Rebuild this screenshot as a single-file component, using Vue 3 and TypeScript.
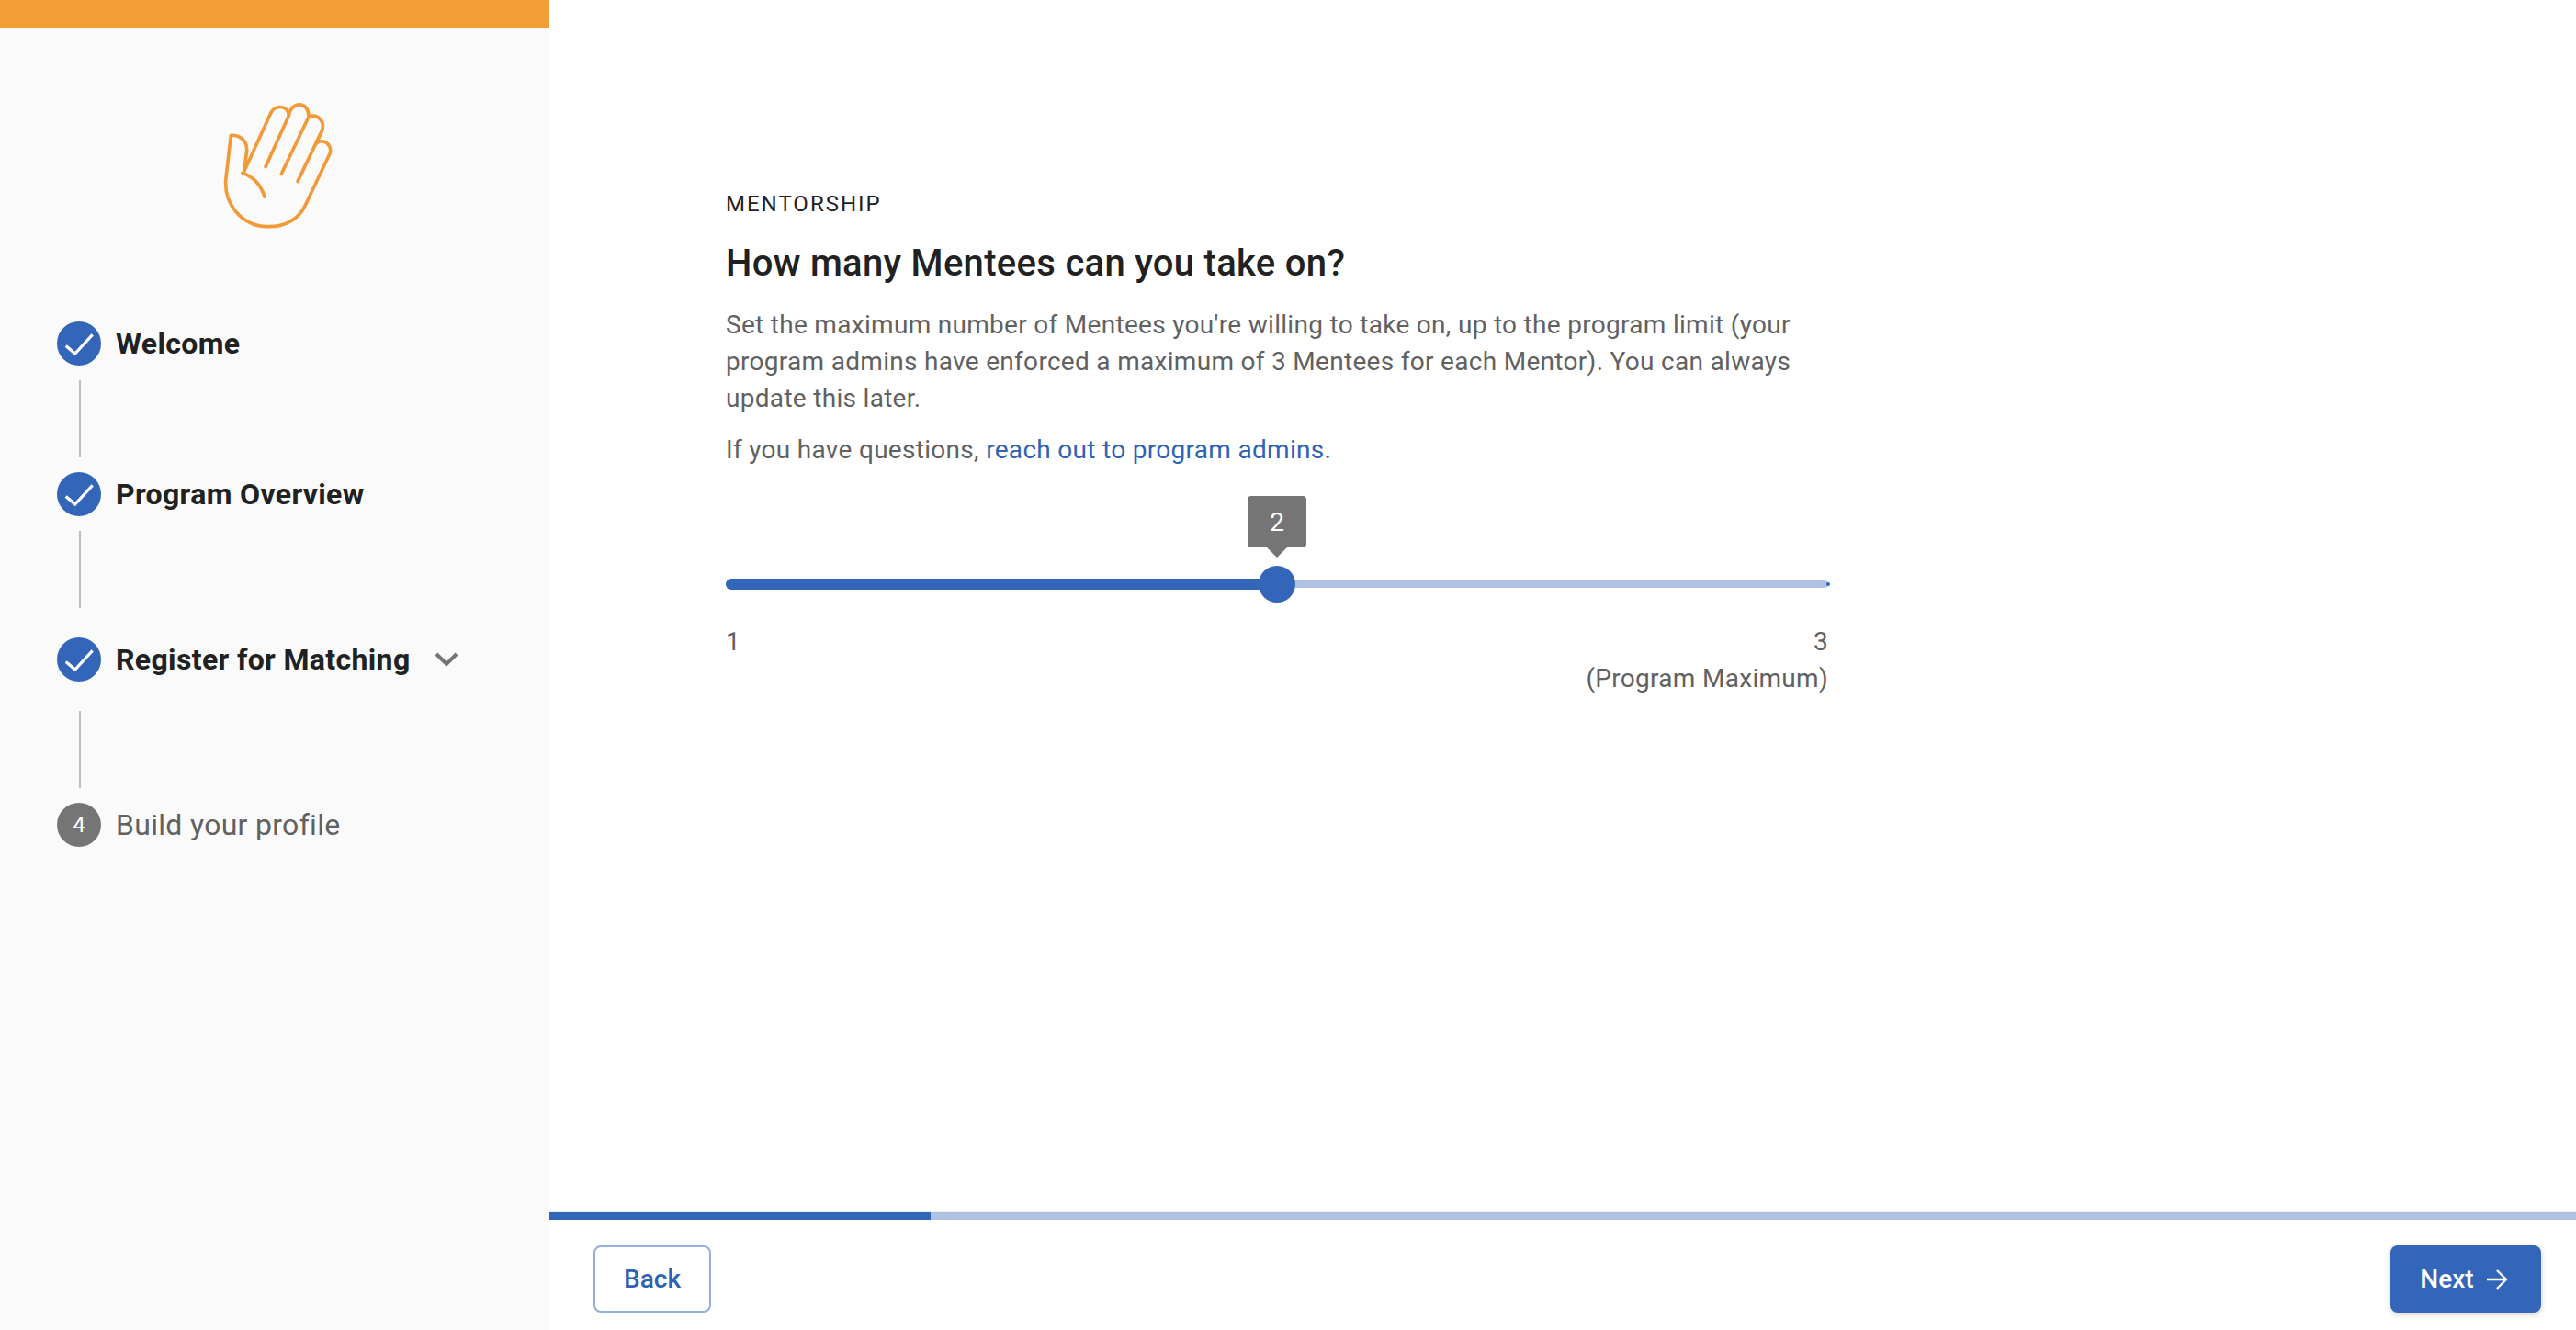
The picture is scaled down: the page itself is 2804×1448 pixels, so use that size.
<script setup lang="ts">
interface Step { label: string; done: boolean; num: number; chevron?: boolean; gap?: 'before' | 'after' }
const steps: Step[] = [
  { label: 'Welcome', done: true, num: 1 },
  { label: 'Program Overview', done: true, num: 2, gap: 'after' },
  { label: 'Register for Matching', done: true, num: 3, chevron: true, gap: 'before' },
  { label: 'Build your profile', done: false, num: 4 },
]
</script>

<template>
  <div class="page">
    <aside class="sidebar">
      <div class="accent"></div>
      <div class="logo">
        <svg width="180" height="180" viewBox="0 0 540 540" fill="none" stroke="#f29a38" stroke-width="11" stroke-linecap="round" stroke-linejoin="round">
          <path d="M127 172 C158 170 180 190 179 222 L170 290 L256 102 C268 72 312 70 316 108 C322 60 382 58 381 112 C410 100 436 126 424 158 L404 200 C428 178 462 204 449 234 L372 396 C350 448 300 472 245 470 C165 468 106 400 110 320 Z" />
          <path d="M240 275 L316 108" />
          <path d="M292 298 L381 112" />
          <path d="M345 323 L424 158" />
          <path d="M165 295 C200 308 226 336 237 373" />
        </svg>
      </div>
      <ol class="steps">
        <li v-for="(s, i) in steps" :key="s.label" class="step">
          <div class="row">
            <span class="badge" :class="{ done: s.done }">
              <svg v-if="s.done" width="48" height="48" viewBox="0 0 48 48" fill="none" stroke="#fff" stroke-width="3.2">
                <path d="M9.7 26.5 L19.7 35 L38.7 14.3" />
              </svg>
              <template v-else>{{ s.num }}</template>
            </span>
            <span class="label" :class="{ strong: s.done }">{{ s.label }}</span>
            <svg v-if="s.chevron" class="chev" width="26" height="16" viewBox="0 0 26 16" fill="none" stroke="#757575" stroke-width="4">
              <path d="M2 2 L13 13 L24 2" />
            </svg>
          </div>
          <div v-if="i < steps.length - 1" class="line" :class="s.gap"></div>
        </li>
      </ol>
    </aside>

    <main class="main">
      <section class="content">
        <div class="eyebrow">MENTORSHIP</div>
        <h1 class="title">How many Mentees can you take on?</h1>
        <p class="body">Set the maximum number of Mentees you're willing to take on, up to the program limit (your program admins have enforced a maximum of 3 Mentees for each Mentor). You can always update this later.</p>
        <p class="body q">If you have questions, <a class="link">reach out to program admins.</a></p>

        <div class="slider">
          <div class="track">
            <div class="fill"></div>
            <span class="end-dot"></span>
            <span class="thumb"></span>
            <span class="tip">2</span>
          </div>
          <div class="scale">
            <span>1</span>
            <span class="max">3<br />(Program Maximum)</span>
          </div>
        </div>
      </section>

      <div class="progress"><div class="progress-fill"></div></div>
      <footer class="footer">
        <button class="btn back">Back</button>
        <button class="btn next">
          Next
          <svg width="24" height="24" viewBox="0 0 24 24" fill="none" stroke="#fff" stroke-width="2.4">
            <path d="M1 12 H22 M12 2 L22 12 L12 22" />
          </svg>
        </button>
      </footer>
    </main>
  </div>
</template>

<style>
html, body { margin: 0; background: #fff; }
</style>

<style scoped>
.page {
  display: flex;
  width: 2804px;
  height: 1448px;
  overflow: hidden;
  font-family: Roboto, "Liberation Sans", sans-serif;
}
.sidebar {
  width: 598px;
  flex: none;
  background: #fafafa;
}
.accent { height: 30px; background: #f29e38; }
.logo { display: flex; justify-content: center; padding-top: 60px; margin-bottom: 80px; }
.steps { list-style: none; margin: 0; padding: 0 0 0 62px; }
.row { display: flex; align-items: center; height: 48px; }
.badge {
  width: 48px;
  height: 48px;
  border-radius: 50%;
  background: #757575;
  color: #fff;
  font-size: 24px;
  display: flex;
  align-items: center;
  justify-content: center;
  flex: none;
}
.badge.done { background: #3366b8; }
.label {
  margin-left: 16px;
  font-size: 32px;
  color: #616161;
  letter-spacing: 0.3px;
}
.label.strong { color: #212121; font-weight: 700; letter-spacing: 0.35px; }
.chev { margin-left: 26px; }
.line {
  width: 2px;
  height: 84px;
  margin: 16px 0 16px 24px;
  background: #bdbdbd;
}
.line.after { margin-bottom: 32px; }
.line.before { margin-top: 32px; }

.main {
  flex: 1;
  display: flex;
  flex-direction: column;
  min-width: 0;
}
.content {
  flex: 1;
  padding: 208px 0 0 192px;
  width: 1200px;
  box-sizing: content-box;
}
.eyebrow {
  font-size: 24px;
  line-height: 28px;
  letter-spacing: 2px;
  color: #212121;
}
.title {
  margin: 27px 0 0;
  font-size: 40px;
  line-height: 48px;
  font-weight: 500;
  color: #212121;
  letter-spacing: 0.3px;
}
.body {
  margin: 23px 0 0;
  font-size: 28px;
  line-height: 40px;
  color: #616161;
  letter-spacing: 0.3px;
}
.body.q { margin-top: 16px; }
.link { color: #2f62b5; }
.slider { padding-top: 122px; }
.track {
  position: relative;
  height: 8px;
  background: #aec3e3;
  border-radius: 4px;
}
.fill {
  position: absolute;
  left: 0;
  top: -2px;
  width: 600px;
  height: 12px;
  background: #3366b8;
  border-radius: 6px;
}
.end-dot {
  position: absolute;
  right: -2px;
  top: 2px;
  width: 4px;
  height: 4px;
  border-radius: 50%;
  background: #3366b8;
}
.thumb {
  position: absolute;
  left: 580px;
  top: -16px;
  width: 40px;
  height: 40px;
  border-radius: 50%;
  background: #3366b8;
}
.tip {
  position: absolute;
  left: 568px;
  top: -92px;
  width: 64px;
  height: 56px;
  border-radius: 4px;
  background: #757575;
  color: #fff;
  font-size: 28px;
  display: flex;
  align-items: center;
  justify-content: center;
}
.tip::after {
  content: "";
  position: absolute;
  left: 21px;
  bottom: -11px;
  border-left: 11px solid transparent;
  border-right: 11px solid transparent;
  border-top: 11px solid #757575;
}
.scale {
  display: flex;
  justify-content: space-between;
  margin-top: 39px;
  font-size: 28px;
  line-height: 40px;
  color: #616161;
  letter-spacing: 0.3px;
}
.max { text-align: right; }

.progress {
  height: 8px;
  border-top: 2px solid #eeeeee;
  background: #aec3e3;
}
.progress-fill { width: 415px; height: 8px; background: #3366b8; }
.footer {
  height: 120px;
  box-sizing: border-box;
  display: flex;
  justify-content: space-between;
  align-items: flex-start;
  padding: 28px 38px 0 48px;
}
.btn {
  height: 73px;
  border-radius: 8px;
  font-family: inherit;
  font-size: 28px;
  font-weight: 500;
  display: inline-flex;
  align-items: center;
  justify-content: center;
  box-sizing: border-box;
}
.back {
  width: 128px;
  background: #fff;
  border: 2px solid #92afe0;
  color: #2f62b5;
}
.next {
  width: 164px;
  gap: 13px;
  padding: 0 4px 0 0;
  border: none;
  background: #3366b8;
  color: #fff;
  box-shadow: 0 2px 6px rgba(0, 0, 0, 0.2);
}
</style>
